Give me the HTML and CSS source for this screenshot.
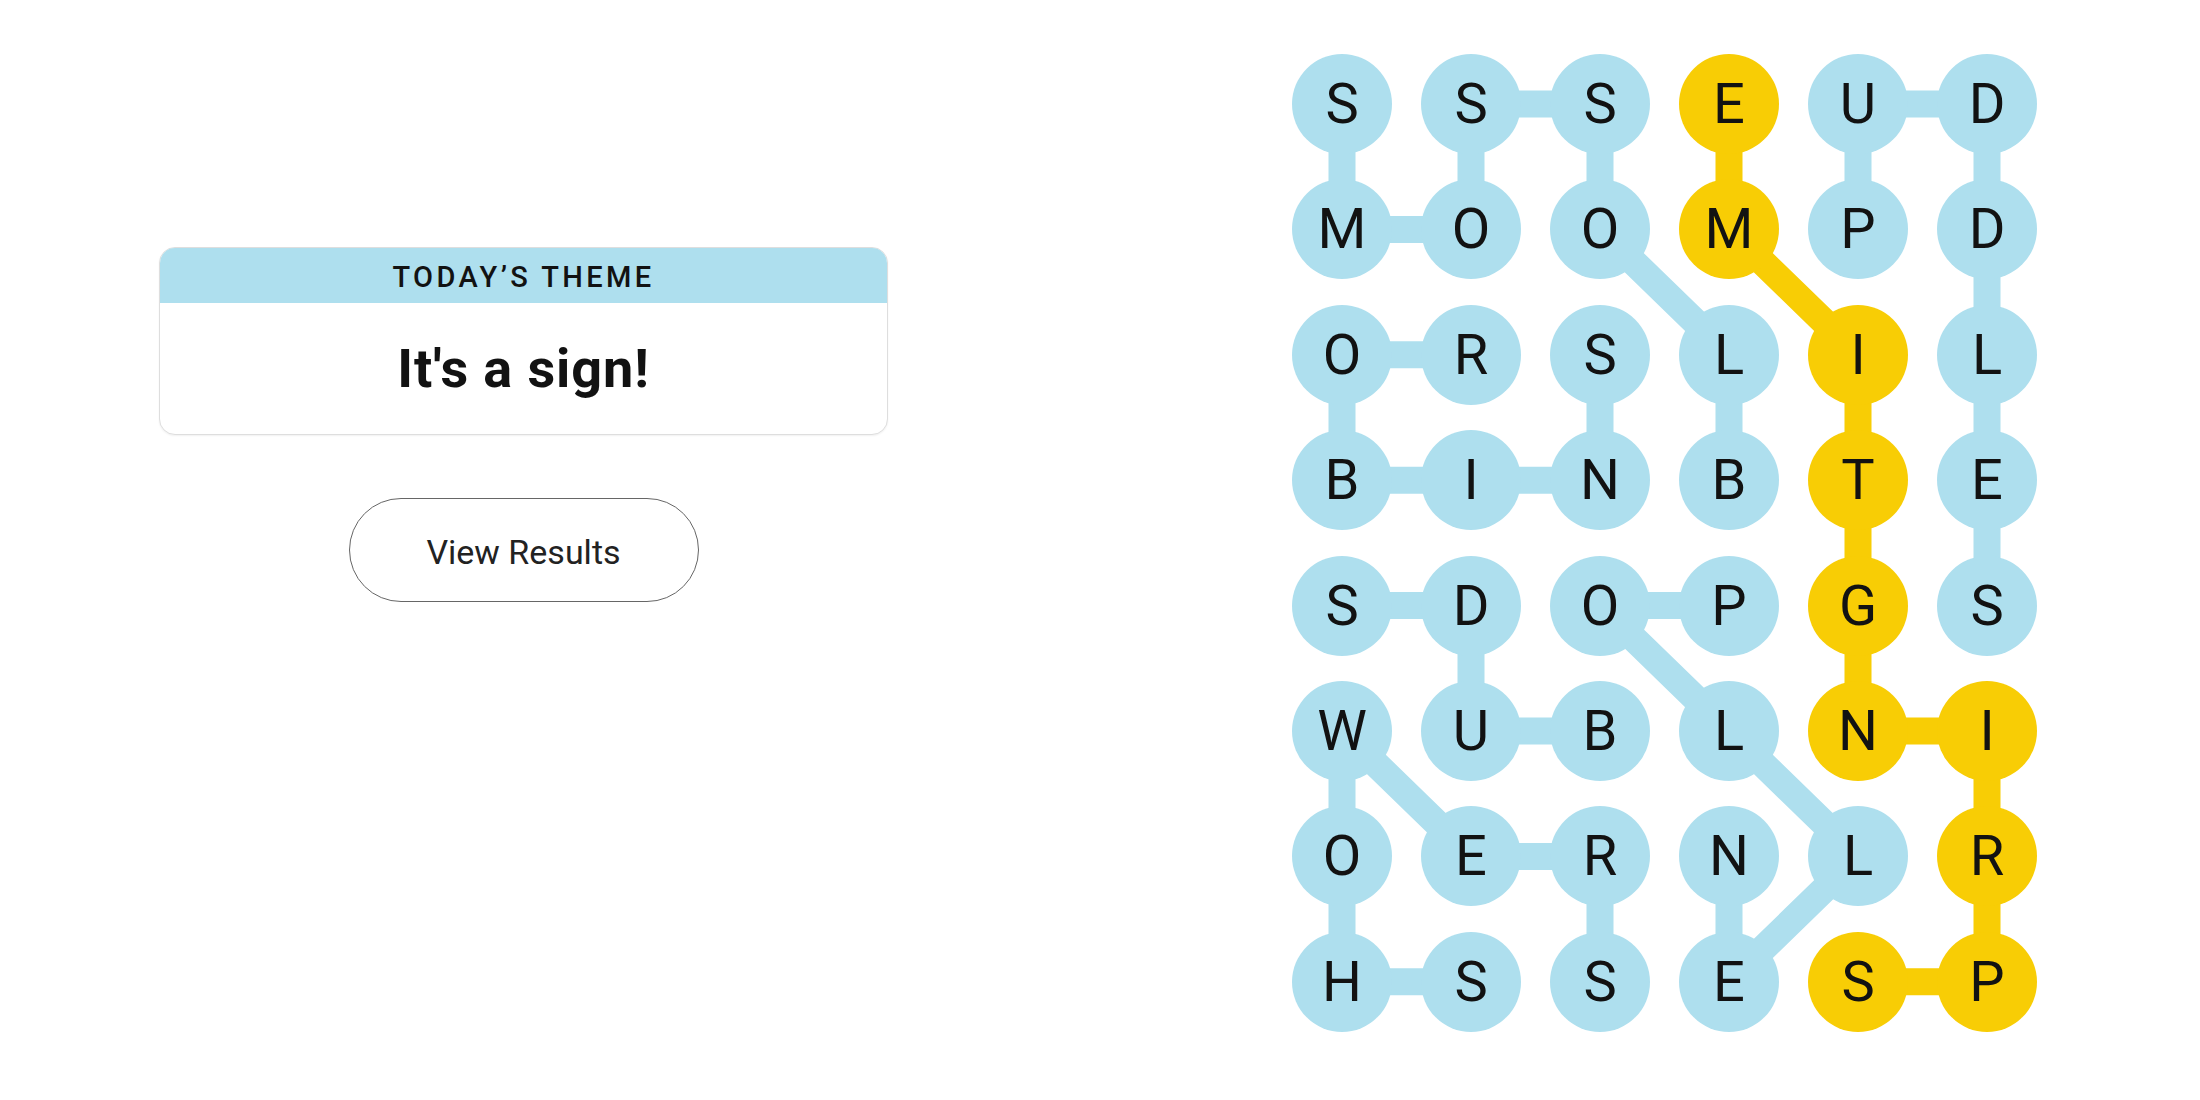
FILE: index.html
```html
<!DOCTYPE html>
<html lang="en">
<head>
<meta charset="utf-8">
<title>Strands</title>
<link rel="stylesheet" href="styles.css">
</head>
<body>
<main class="page">
  <section class="side">
    <div class="theme-card">
      <div class="theme-head">TODAY’S THEME</div>
      <div class="theme-body">It's a sign!</div>
    </div>
    <button class="results-btn" type="button">View Results</button>
  </section>
  <section class="board-wrap">
    <div class="board">
      <svg class="links" width="745" height="978" viewBox="0 0 745 978" aria-hidden="true">
        <g fill="none" stroke="#aedfee" stroke-width="27" stroke-linejoin="round">
          <polyline points="437,426.2 437,300.8 308,175.4 308,50 179,50 179,175.4 50,175.4 50,50"/>
          <polyline points="566,175.4 566,50 695,50 695,551.6"/>
          <polyline points="179,300.8 50,300.8 50,426.2 179,426.2 308,426.2 308,300.8"/>
          <polyline points="308,677 179,677 179,551.6 50,551.6"/>
          <polyline points="437,551.6 308,551.6 437,677 566,802.4 437,927.8 437,802.4"/>
          <polyline points="179,927.8 50,927.8 50,802.4 50,677 179,802.4 308,802.4 308,927.8"/>
        </g>
        <polyline fill="none" stroke="#f8cd05" stroke-width="27" stroke-linejoin="round" points="437,50 437,175.4 566,300.8 566,426.2 566,551.6 566,677 695,677 695,802.4 695,927.8 566,927.8"/>
      </svg>
      <div class="cell">S</div><div class="cell">S</div><div class="cell">S</div><div class="cell span">E</div><div class="cell">U</div><div class="cell">D</div>
      <div class="cell">M</div><div class="cell">O</div><div class="cell">O</div><div class="cell span">M</div><div class="cell">P</div><div class="cell">D</div>
      <div class="cell">O</div><div class="cell">R</div><div class="cell">S</div><div class="cell">L</div><div class="cell span">I</div><div class="cell">L</div>
      <div class="cell">B</div><div class="cell">I</div><div class="cell">N</div><div class="cell">B</div><div class="cell span">T</div><div class="cell">E</div>
      <div class="cell">S</div><div class="cell">D</div><div class="cell">O</div><div class="cell">P</div><div class="cell span">G</div><div class="cell">S</div>
      <div class="cell">W</div><div class="cell">U</div><div class="cell">B</div><div class="cell">L</div><div class="cell span">N</div><div class="cell span">I</div>
      <div class="cell">O</div><div class="cell">E</div><div class="cell">R</div><div class="cell">N</div><div class="cell">L</div><div class="cell span">R</div>
      <div class="cell">H</div><div class="cell">S</div><div class="cell">S</div><div class="cell">E</div><div class="cell span">S</div><div class="cell span">P</div>
    </div>
  </section>
</main>
</body>
</html>
```
FILE: styles.css
```css
html, body {
  margin: 0;
  padding: 0;
  background: #ffffff;
}

body {
  font-family: Roboto, "Liberation Sans", Arial, sans-serif;
  color: #121212;
}

.page {
  display: flex;
  align-items: flex-start;
  width: 2200px;
  height: 1100px;
  overflow: hidden;
}

.side {
  flex: 0 0 1047px;
  display: flex;
  flex-direction: column;
  align-items: center;
  padding-top: 247px;
}

.theme-card {
  width: 729px;
  box-sizing: border-box;
  border: 1px solid #dedede;
  border-radius: 16px;
  overflow: hidden;
  box-shadow: 0 1px 2px rgba(0, 0, 0, 0.06);
  background: #fff;
}

.theme-head {
  height: 55px;
  background: #aedfee;
  display: flex;
  align-items: center;
  justify-content: center;
  font-size: 29px;
  font-weight: 500;
  letter-spacing: 3.4px;
  color: #121212;
  padding-top: 2px;
  box-sizing: border-box;
}

.theme-body {
  height: 131px;
  display: flex;
  align-items: center;
  justify-content: center;
  font-size: 54px;
  font-weight: 700;
  color: #121212;
  letter-spacing: 0.9px;
}

.results-btn {
  margin-top: 63px;
  width: 350px;
  height: 104px;
  box-sizing: border-box;
  border: 1.5px solid #666;
  border-radius: 52px;
  background: #fff;
  font-family: Roboto, "Liberation Sans", Arial, sans-serif;
  font-size: 34px;
  font-weight: 400;
  color: #222;
  padding: 4px 0 0;
}

.board-wrap {
  padding-left: 245px;
  padding-top: 54px;
}

.board {
  position: relative;
  display: grid;
  grid-template-columns: repeat(6, 100px);
  grid-template-rows: repeat(8, 100px);
  column-gap: 29px;
  row-gap: 25.4px;
}

.links {
  position: absolute;
  left: 0;
  top: 0;
  z-index: 0;
}

.cell {
  position: relative;
  z-index: 1;
  width: 100px;
  height: 100px;
  border-radius: 50%;
  background: #aedfee;
  display: flex;
  align-items: center;
  justify-content: center;
  font-size: 56px;
  font-weight: 400;
  color: #121212;
}

.cell.span {
  background: #f8cd05;
}
```
